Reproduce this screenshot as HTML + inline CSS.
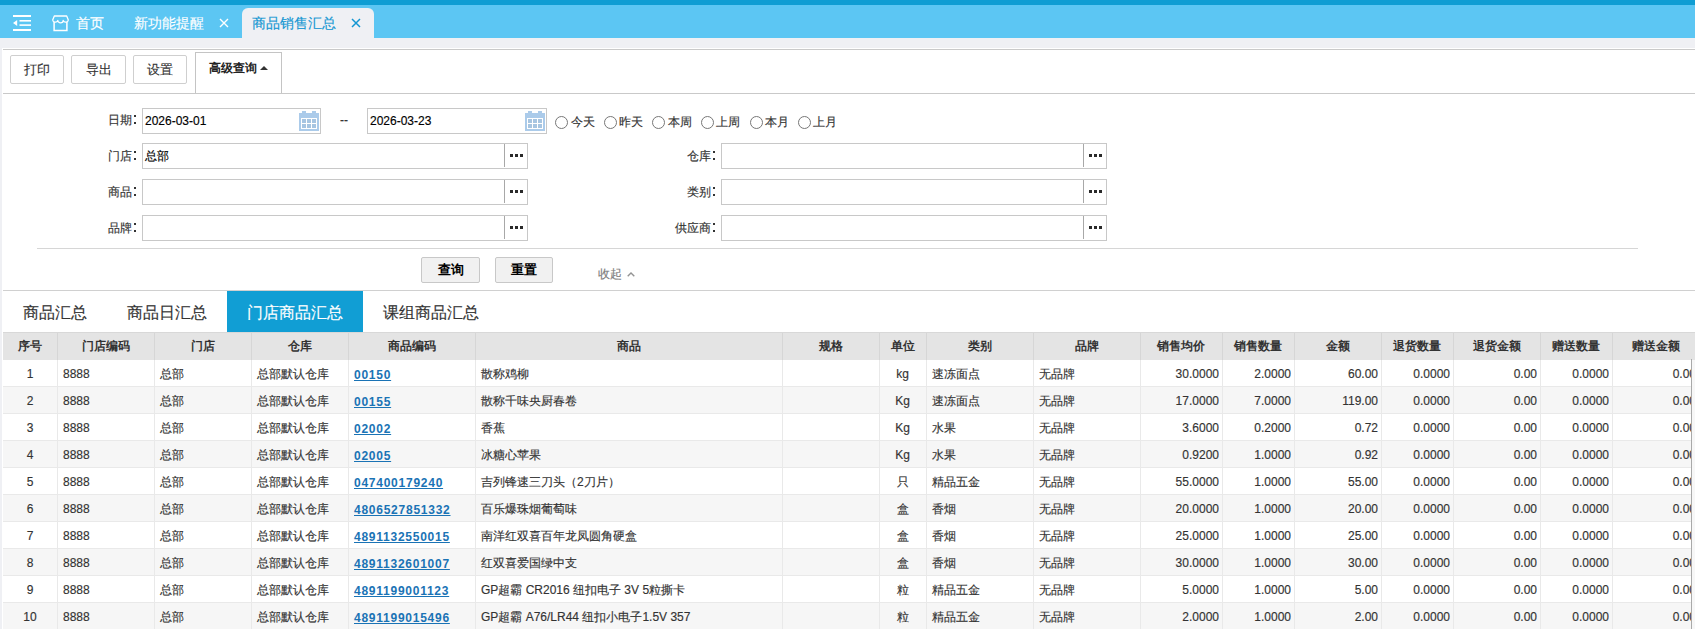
<!DOCTYPE html>
<html><head><meta charset="utf-8">
<style>
*{box-sizing:border-box;margin:0;padding:0}
html,body{width:1695px;height:629px;overflow:hidden}
body{position:relative;-webkit-text-stroke:0.15px currentColor;background:#eff0f4;font-family:"Liberation Sans",sans-serif;color:#333;font-size:12px}
.a{position:absolute}
.topdark{left:0;top:0;width:1695px;height:5px;background:#0f9dd3}
.toplight{left:0;top:5px;width:1695px;height:33px;background:#5cc6f3}
.ttxt{font-size:14px;color:#fff;line-height:14px;white-space:nowrap}
.acttab{left:242px;top:8px;width:132px;height:30px;background:#eff0f4;border-radius:6px 6px 0 0}
.panel{left:2px;top:48px;width:1693px;height:581px;background:#fff}
.hl{height:1px;background:#c9c9c9}
.btn{height:29px;top:55px;border:1px solid #cfcfcf;border-radius:2px;background:#fff;font-size:13px;line-height:27px;text-align:center;color:#333}
.lbl{font-size:12px;line-height:12px;white-space:nowrap;text-align:right}
.inp{border:1px solid #c8c8c8;height:26px;background:#fff}
.inp .v{position:absolute;left:2px;top:0;line-height:24px;font-size:12px;color:#000}
.ell{position:absolute;right:0;top:0;width:23px;height:24px}
.ell:before{content:"";position:absolute;left:0;top:0;width:1px;height:23px;background:#a8a8a8}
.ell i{position:absolute;top:10px;width:3px;height:3px;background:#2a2a2a}
.radio{width:13px;height:13px;border:1px solid #777;border-radius:50%;top:116px}
.rtxt{top:116px;font-size:12px;line-height:13px;white-space:nowrap}
.qbtn{-webkit-text-stroke:0;top:257px;height:26px;border:1px solid #c8c8c8;border-radius:2px;background:#f1f1f1;font-size:13px;font-weight:bold;line-height:24px;text-align:center;color:#000}
.tab{top:292px;height:41px;font-size:16px;line-height:41px;white-space:nowrap;color:#333}
.th{-webkit-text-stroke:0;top:333px;height:27px;line-height:27px;font-size:12px;font-weight:bold;text-align:center;color:#333;white-space:nowrap}
.td{height:26px;line-height:28px;font-size:12px;white-space:nowrap;overflow:hidden;color:#333}
.tl{padding-left:6px}
.tc{text-align:center}
.tr{text-align:right;padding-right:3px}
.td u{-webkit-text-stroke:0;color:#1a73b5;font-weight:bold;letter-spacing:.75px;position:relative;top:1px}
</style></head><body>
<div class="a topdark"></div>
<div class="a toplight"></div>
<!-- menu icon -->
<svg class="a" style="left:13px;top:15px" width="19" height="17" viewBox="0 0 19 17">
<rect x="0" y="0" width="18" height="2" fill="#fff"/>
<rect x="6.5" y="5" width="11.5" height="1.6" fill="#fff"/>
<rect x="6.5" y="9.3" width="11.5" height="1.6" fill="#fff"/>
<rect x="0" y="14" width="18" height="2" fill="#fff"/>
<path d="M0 8 L4.2 5 L4.2 11 Z" fill="#fff"/>
</svg>
<!-- store icon -->
<svg class="a" style="left:52px;top:15px" width="17" height="17" viewBox="0 0 17 17">
<path d="M2.3 1 H14.7 L16.3 5 A2.6 2.4 0 0 1 11.2 5.4 A2.7 2.4 0 0 1 5.8 5.4 A2.6 2.4 0 0 1 0.7 5 Z" fill="none" stroke="#fff" stroke-width="1.3" stroke-linejoin="round"/>
<path d="M2.1 7 V15.6 H14.9 V7" fill="none" stroke="#fff" stroke-width="1.5"/>
</svg>
<div class="a ttxt" style="left:76px;top:16px">首页</div>
<div class="a ttxt" style="left:134px;top:16px">新功能提醒</div>
<svg class="a" style="left:219px;top:18px" width="10" height="10" viewBox="0 0 10 10"><path d="M1 1 L9 9 M9 1 L1 9" stroke="#fff" stroke-width="1.4"/></svg>
<div class="a acttab"></div>
<div class="a ttxt" style="left:252px;top:16px;color:#1396d2">商品销售汇总</div>
<svg class="a" style="left:351px;top:18px" width="10" height="10" viewBox="0 0 10 10"><path d="M1 1 L9 9 M9 1 L1 9" stroke="#1396d2" stroke-width="1.5"/></svg>

<div class="a panel"></div>
<div class="a hl" style="left:3px;top:49px;width:1692px"></div>
<div class="a btn" style="left:10px;width:54px">打印</div>
<div class="a btn" style="left:71px;width:55px">导出</div>
<div class="a btn" style="left:133px;width:54px">设置</div>
<div class="a" style="left:195px;top:52px;width:87px;height:42px;border:1px solid #c4c4c4;border-bottom:none;background:#fff"></div>
<div class="a" style="-webkit-text-stroke:0;left:209px;top:62px;font-size:12px;font-weight:bold;line-height:13px;color:#222;white-space:nowrap">高级查询</div>
<svg class="a" style="left:260px;top:66px" width="8" height="4" viewBox="0 0 8 4"><path d="M0 4 L4 0 L8 4 Z" fill="#333"/></svg>
<div class="a hl" style="left:3px;top:93px;width:1692px"></div>

<!-- form -->
<div class="a lbl" style="left:52px;top:114px;width:80px">日期</div><div class="a" style="left:134px;top:115px;width:2px;height:2px;background:#333"></div><div class="a" style="left:134px;top:122px;width:2px;height:2px;background:#333"></div>
<div class="a inp" style="left:142px;top:108px;width:179px"><span class="v">2026-03-01</span>
<svg class="a" style="left:156px;top:2px" width="20" height="20" viewBox="0 0 20 20">
<rect x="3" y="0" width="4" height="2" fill="#abcbea"/><rect x="13" y="0" width="4" height="2" fill="#abcbea"/>
<rect x="0" y="2" width="20" height="18" fill="#abcbea"/>
<rect x="2" y="7" width="16" height="11" fill="#fff"/>
<rect x="3" y="8" width="4" height="4" fill="#a7c5e1"/><rect x="8" y="8" width="4" height="4" fill="#a7c5e1"/><rect x="13" y="8" width="4" height="4" fill="#a7c5e1"/>
<rect x="3" y="13" width="4" height="4" fill="#a7c5e1"/><rect x="8" y="13" width="4" height="4" fill="#a7c5e1"/><rect x="13" y="13" width="4" height="4" fill="#a7c5e1"/>
</svg></div>
<div class="a" style="left:340px;top:114px;font-size:12px;line-height:13px">--</div>
<div class="a inp" style="left:367px;top:108px;width:180px"><span class="v">2026-03-23</span>
<svg class="a" style="left:157px;top:2px" width="20" height="20" viewBox="0 0 20 20">
<rect x="3" y="0" width="4" height="2" fill="#abcbea"/><rect x="13" y="0" width="4" height="2" fill="#abcbea"/>
<rect x="0" y="2" width="20" height="18" fill="#abcbea"/>
<rect x="2" y="7" width="16" height="11" fill="#fff"/>
<rect x="3" y="8" width="4" height="4" fill="#a7c5e1"/><rect x="8" y="8" width="4" height="4" fill="#a7c5e1"/><rect x="13" y="8" width="4" height="4" fill="#a7c5e1"/>
<rect x="3" y="13" width="4" height="4" fill="#a7c5e1"/><rect x="8" y="13" width="4" height="4" fill="#a7c5e1"/><rect x="13" y="13" width="4" height="4" fill="#a7c5e1"/>
</svg></div>
<div class="a radio" style="left:555px"></div><div class="a rtxt" style="left:571px">今天</div>
<div class="a radio" style="left:604px"></div><div class="a rtxt" style="left:619px">昨天</div>
<div class="a radio" style="left:652px"></div><div class="a rtxt" style="left:668px">本周</div>
<div class="a radio" style="left:701px"></div><div class="a rtxt" style="left:716px">上周</div>
<div class="a radio" style="left:750px"></div><div class="a rtxt" style="left:765px">本月</div>
<div class="a radio" style="left:798px"></div><div class="a rtxt" style="left:813px">上月</div>

<div class="a lbl" style="left:52px;top:150px;width:80px">门店</div><div class="a" style="left:134px;top:151px;width:2px;height:2px;background:#333"></div><div class="a" style="left:134px;top:158px;width:2px;height:2px;background:#333"></div>
<div class="a inp" style="left:142px;top:143px;width:386px"><span class="v">总部</span><div class="ell"><i style="left:6px"></i><i style="left:11px"></i><i style="left:16px"></i></div></div>
<div class="a lbl" style="left:52px;top:186px;width:80px">商品</div><div class="a" style="left:134px;top:187px;width:2px;height:2px;background:#333"></div><div class="a" style="left:134px;top:194px;width:2px;height:2px;background:#333"></div>
<div class="a inp" style="left:142px;top:179px;width:386px"><div class="ell"><i style="left:6px"></i><i style="left:11px"></i><i style="left:16px"></i></div></div>
<div class="a lbl" style="left:52px;top:222px;width:80px">品牌</div><div class="a" style="left:134px;top:223px;width:2px;height:2px;background:#333"></div><div class="a" style="left:134px;top:230px;width:2px;height:2px;background:#333"></div>
<div class="a inp" style="left:142px;top:215px;width:386px"><div class="ell"><i style="left:6px"></i><i style="left:11px"></i><i style="left:16px"></i></div></div>

<div class="a lbl" style="left:631px;top:150px;width:80px">仓库</div><div class="a" style="left:713px;top:151px;width:2px;height:2px;background:#333"></div><div class="a" style="left:713px;top:158px;width:2px;height:2px;background:#333"></div>
<div class="a inp" style="left:721px;top:143px;width:386px"><div class="ell"><i style="left:6px"></i><i style="left:11px"></i><i style="left:16px"></i></div></div>
<div class="a lbl" style="left:631px;top:186px;width:80px">类别</div><div class="a" style="left:713px;top:187px;width:2px;height:2px;background:#333"></div><div class="a" style="left:713px;top:194px;width:2px;height:2px;background:#333"></div>
<div class="a inp" style="left:721px;top:179px;width:386px"><div class="ell"><i style="left:6px"></i><i style="left:11px"></i><i style="left:16px"></i></div></div>
<div class="a lbl" style="left:631px;top:222px;width:80px">供应商</div><div class="a" style="left:713px;top:223px;width:2px;height:2px;background:#333"></div><div class="a" style="left:713px;top:230px;width:2px;height:2px;background:#333"></div>
<div class="a inp" style="left:721px;top:215px;width:386px"><div class="ell"><i style="left:6px"></i><i style="left:11px"></i><i style="left:16px"></i></div></div>

<div class="a hl" style="left:37px;top:248px;width:1601px;background:#d6d6d6"></div>
<div class="a qbtn" style="left:421px;width:59px">查询</div>
<div class="a qbtn" style="left:495px;width:58px">重置</div>
<div class="a" style="left:598px;top:268px;font-size:12px;line-height:13px;color:#7c7c7c">收起</div>
<svg class="a" style="left:627px;top:272px" width="8" height="5" viewBox="0 0 8 5"><path d="M0.7 4.3 L4 1.1 L7.3 4.3" fill="none" stroke="#939393" stroke-width="1.4"/></svg>
<div class="a hl" style="left:3px;top:290px;width:1692px;background:#d0d0d0"></div>

<div class="a tab" style="left:23px">商品汇总</div>
<div class="a tab" style="left:127px">商品日汇总</div>
<div class="a" style="left:227px;top:291px;width:136px;height:41px;background:#119ed4"></div>
<div class="a tab" style="left:247px;color:#fff">门店商品汇总</div>
<div class="a tab" style="left:383px">课组商品汇总</div>

<!--TABLE-->
<div class="a" style="left:3px;top:332px;width:1692px;height:1px;background:#d8d8d8"></div>
<div class="a" style="left:3px;top:333px;width:1692px;height:27px;background:#e4e4e4"></div>
<div class="a th" style="left:3px;width:54px">序号</div>
<div class="a th" style="left:57px;width:97px">门店编码</div>
<div class="a" style="left:57px;top:333px;width:1px;height:27px;background:#d6d6d6"></div>
<div class="a th" style="left:154px;width:97px">门店</div>
<div class="a" style="left:154px;top:333px;width:1px;height:27px;background:#d6d6d6"></div>
<div class="a th" style="left:251px;width:97px">仓库</div>
<div class="a" style="left:251px;top:333px;width:1px;height:27px;background:#d6d6d6"></div>
<div class="a th" style="left:348px;width:127px">商品编码</div>
<div class="a" style="left:348px;top:333px;width:1px;height:27px;background:#d6d6d6"></div>
<div class="a th" style="left:475px;width:307px">商品</div>
<div class="a" style="left:475px;top:333px;width:1px;height:27px;background:#d6d6d6"></div>
<div class="a th" style="left:782px;width:97px">规格</div>
<div class="a" style="left:782px;top:333px;width:1px;height:27px;background:#d6d6d6"></div>
<div class="a th" style="left:879px;width:47px">单位</div>
<div class="a" style="left:879px;top:333px;width:1px;height:27px;background:#d6d6d6"></div>
<div class="a th" style="left:926px;width:107px">类别</div>
<div class="a" style="left:926px;top:333px;width:1px;height:27px;background:#d6d6d6"></div>
<div class="a th" style="left:1033px;width:107px">品牌</div>
<div class="a" style="left:1033px;top:333px;width:1px;height:27px;background:#d6d6d6"></div>
<div class="a th" style="left:1140px;width:82px">销售均价</div>
<div class="a" style="left:1140px;top:333px;width:1px;height:27px;background:#d6d6d6"></div>
<div class="a th" style="left:1222px;width:72px">销售数量</div>
<div class="a" style="left:1222px;top:333px;width:1px;height:27px;background:#d6d6d6"></div>
<div class="a th" style="left:1294px;width:87px">金额</div>
<div class="a" style="left:1294px;top:333px;width:1px;height:27px;background:#d6d6d6"></div>
<div class="a th" style="left:1381px;width:72px">退货数量</div>
<div class="a" style="left:1381px;top:333px;width:1px;height:27px;background:#d6d6d6"></div>
<div class="a th" style="left:1453px;width:87px">退货金额</div>
<div class="a" style="left:1453px;top:333px;width:1px;height:27px;background:#d6d6d6"></div>
<div class="a th" style="left:1540px;width:72px">赠送数量</div>
<div class="a" style="left:1540px;top:333px;width:1px;height:27px;background:#d6d6d6"></div>
<div class="a th" style="left:1612px;width:87px">赠送金额</div>
<div class="a" style="left:1612px;top:333px;width:1px;height:27px;background:#d6d6d6"></div>
<div class="a" style="left:3px;top:360px;width:1688px;height:26px;background:#fff"></div>
<div class="a" style="left:3px;top:386px;width:1688px;height:1px;background:#e9e9e9"></div>
<div class="a td tc" style="left:3px;top:360px;width:54px">1</div>
<div class="a td tl" style="left:57px;top:360px;width:97px">8888</div>
<div class="a td tl" style="left:154px;top:360px;width:97px">总部</div>
<div class="a td tl" style="left:251px;top:360px;width:97px">总部默认仓库</div>
<div class="a td tl" style="left:348px;top:360px;width:127px"><u>00150</u></div>
<div class="a td tl" style="left:475px;top:360px;width:307px">散称鸡柳</div>
<div class="a td tc" style="left:879px;top:360px;width:47px">kg</div>
<div class="a td tl" style="left:926px;top:360px;width:107px">速冻面点</div>
<div class="a td tl" style="left:1033px;top:360px;width:107px">无品牌</div>
<div class="a td tr" style="left:1140px;top:360px;width:82px">30.0000</div>
<div class="a td tr" style="left:1222px;top:360px;width:72px">2.0000</div>
<div class="a td tr" style="left:1294px;top:360px;width:87px">60.00</div>
<div class="a td tr" style="left:1381px;top:360px;width:72px">0.0000</div>
<div class="a td tr" style="left:1453px;top:360px;width:87px">0.00</div>
<div class="a td tr" style="left:1540px;top:360px;width:72px">0.0000</div>
<div class="a td tr" style="left:1612px;top:360px;width:87px">0.00</div>
<div class="a" style="left:3px;top:387px;width:1688px;height:26px;background:#f6f6f6"></div>
<div class="a" style="left:3px;top:413px;width:1688px;height:1px;background:#e9e9e9"></div>
<div class="a td tc" style="left:3px;top:387px;width:54px">2</div>
<div class="a td tl" style="left:57px;top:387px;width:97px">8888</div>
<div class="a td tl" style="left:154px;top:387px;width:97px">总部</div>
<div class="a td tl" style="left:251px;top:387px;width:97px">总部默认仓库</div>
<div class="a td tl" style="left:348px;top:387px;width:127px"><u>00155</u></div>
<div class="a td tl" style="left:475px;top:387px;width:307px">散称千味央厨春卷</div>
<div class="a td tc" style="left:879px;top:387px;width:47px">Kg</div>
<div class="a td tl" style="left:926px;top:387px;width:107px">速冻面点</div>
<div class="a td tl" style="left:1033px;top:387px;width:107px">无品牌</div>
<div class="a td tr" style="left:1140px;top:387px;width:82px">17.0000</div>
<div class="a td tr" style="left:1222px;top:387px;width:72px">7.0000</div>
<div class="a td tr" style="left:1294px;top:387px;width:87px">119.00</div>
<div class="a td tr" style="left:1381px;top:387px;width:72px">0.0000</div>
<div class="a td tr" style="left:1453px;top:387px;width:87px">0.00</div>
<div class="a td tr" style="left:1540px;top:387px;width:72px">0.0000</div>
<div class="a td tr" style="left:1612px;top:387px;width:87px">0.00</div>
<div class="a" style="left:3px;top:414px;width:1688px;height:26px;background:#fff"></div>
<div class="a" style="left:3px;top:440px;width:1688px;height:1px;background:#e9e9e9"></div>
<div class="a td tc" style="left:3px;top:414px;width:54px">3</div>
<div class="a td tl" style="left:57px;top:414px;width:97px">8888</div>
<div class="a td tl" style="left:154px;top:414px;width:97px">总部</div>
<div class="a td tl" style="left:251px;top:414px;width:97px">总部默认仓库</div>
<div class="a td tl" style="left:348px;top:414px;width:127px"><u>02002</u></div>
<div class="a td tl" style="left:475px;top:414px;width:307px">香蕉</div>
<div class="a td tc" style="left:879px;top:414px;width:47px">Kg</div>
<div class="a td tl" style="left:926px;top:414px;width:107px">水果</div>
<div class="a td tl" style="left:1033px;top:414px;width:107px">无品牌</div>
<div class="a td tr" style="left:1140px;top:414px;width:82px">3.6000</div>
<div class="a td tr" style="left:1222px;top:414px;width:72px">0.2000</div>
<div class="a td tr" style="left:1294px;top:414px;width:87px">0.72</div>
<div class="a td tr" style="left:1381px;top:414px;width:72px">0.0000</div>
<div class="a td tr" style="left:1453px;top:414px;width:87px">0.00</div>
<div class="a td tr" style="left:1540px;top:414px;width:72px">0.0000</div>
<div class="a td tr" style="left:1612px;top:414px;width:87px">0.00</div>
<div class="a" style="left:3px;top:441px;width:1688px;height:26px;background:#f6f6f6"></div>
<div class="a" style="left:3px;top:467px;width:1688px;height:1px;background:#e9e9e9"></div>
<div class="a td tc" style="left:3px;top:441px;width:54px">4</div>
<div class="a td tl" style="left:57px;top:441px;width:97px">8888</div>
<div class="a td tl" style="left:154px;top:441px;width:97px">总部</div>
<div class="a td tl" style="left:251px;top:441px;width:97px">总部默认仓库</div>
<div class="a td tl" style="left:348px;top:441px;width:127px"><u>02005</u></div>
<div class="a td tl" style="left:475px;top:441px;width:307px">冰糖心苹果</div>
<div class="a td tc" style="left:879px;top:441px;width:47px">Kg</div>
<div class="a td tl" style="left:926px;top:441px;width:107px">水果</div>
<div class="a td tl" style="left:1033px;top:441px;width:107px">无品牌</div>
<div class="a td tr" style="left:1140px;top:441px;width:82px">0.9200</div>
<div class="a td tr" style="left:1222px;top:441px;width:72px">1.0000</div>
<div class="a td tr" style="left:1294px;top:441px;width:87px">0.92</div>
<div class="a td tr" style="left:1381px;top:441px;width:72px">0.0000</div>
<div class="a td tr" style="left:1453px;top:441px;width:87px">0.00</div>
<div class="a td tr" style="left:1540px;top:441px;width:72px">0.0000</div>
<div class="a td tr" style="left:1612px;top:441px;width:87px">0.00</div>
<div class="a" style="left:3px;top:468px;width:1688px;height:26px;background:#fff"></div>
<div class="a" style="left:3px;top:494px;width:1688px;height:1px;background:#e9e9e9"></div>
<div class="a td tc" style="left:3px;top:468px;width:54px">5</div>
<div class="a td tl" style="left:57px;top:468px;width:97px">8888</div>
<div class="a td tl" style="left:154px;top:468px;width:97px">总部</div>
<div class="a td tl" style="left:251px;top:468px;width:97px">总部默认仓库</div>
<div class="a td tl" style="left:348px;top:468px;width:127px"><u>047400179240</u></div>
<div class="a td tl" style="left:475px;top:468px;width:307px">吉列锋速三刀头（2刀片）</div>
<div class="a td tc" style="left:879px;top:468px;width:47px">只</div>
<div class="a td tl" style="left:926px;top:468px;width:107px">精品五金</div>
<div class="a td tl" style="left:1033px;top:468px;width:107px">无品牌</div>
<div class="a td tr" style="left:1140px;top:468px;width:82px">55.0000</div>
<div class="a td tr" style="left:1222px;top:468px;width:72px">1.0000</div>
<div class="a td tr" style="left:1294px;top:468px;width:87px">55.00</div>
<div class="a td tr" style="left:1381px;top:468px;width:72px">0.0000</div>
<div class="a td tr" style="left:1453px;top:468px;width:87px">0.00</div>
<div class="a td tr" style="left:1540px;top:468px;width:72px">0.0000</div>
<div class="a td tr" style="left:1612px;top:468px;width:87px">0.00</div>
<div class="a" style="left:3px;top:495px;width:1688px;height:26px;background:#f6f6f6"></div>
<div class="a" style="left:3px;top:521px;width:1688px;height:1px;background:#e9e9e9"></div>
<div class="a td tc" style="left:3px;top:495px;width:54px">6</div>
<div class="a td tl" style="left:57px;top:495px;width:97px">8888</div>
<div class="a td tl" style="left:154px;top:495px;width:97px">总部</div>
<div class="a td tl" style="left:251px;top:495px;width:97px">总部默认仓库</div>
<div class="a td tl" style="left:348px;top:495px;width:127px"><u>4806527851332</u></div>
<div class="a td tl" style="left:475px;top:495px;width:307px">百乐爆珠烟葡萄味</div>
<div class="a td tc" style="left:879px;top:495px;width:47px">盒</div>
<div class="a td tl" style="left:926px;top:495px;width:107px">香烟</div>
<div class="a td tl" style="left:1033px;top:495px;width:107px">无品牌</div>
<div class="a td tr" style="left:1140px;top:495px;width:82px">20.0000</div>
<div class="a td tr" style="left:1222px;top:495px;width:72px">1.0000</div>
<div class="a td tr" style="left:1294px;top:495px;width:87px">20.00</div>
<div class="a td tr" style="left:1381px;top:495px;width:72px">0.0000</div>
<div class="a td tr" style="left:1453px;top:495px;width:87px">0.00</div>
<div class="a td tr" style="left:1540px;top:495px;width:72px">0.0000</div>
<div class="a td tr" style="left:1612px;top:495px;width:87px">0.00</div>
<div class="a" style="left:3px;top:522px;width:1688px;height:26px;background:#fff"></div>
<div class="a" style="left:3px;top:548px;width:1688px;height:1px;background:#e9e9e9"></div>
<div class="a td tc" style="left:3px;top:522px;width:54px">7</div>
<div class="a td tl" style="left:57px;top:522px;width:97px">8888</div>
<div class="a td tl" style="left:154px;top:522px;width:97px">总部</div>
<div class="a td tl" style="left:251px;top:522px;width:97px">总部默认仓库</div>
<div class="a td tl" style="left:348px;top:522px;width:127px"><u>4891132550015</u></div>
<div class="a td tl" style="left:475px;top:522px;width:307px">南洋红双喜百年龙凤圆角硬盒</div>
<div class="a td tc" style="left:879px;top:522px;width:47px">盒</div>
<div class="a td tl" style="left:926px;top:522px;width:107px">香烟</div>
<div class="a td tl" style="left:1033px;top:522px;width:107px">无品牌</div>
<div class="a td tr" style="left:1140px;top:522px;width:82px">25.0000</div>
<div class="a td tr" style="left:1222px;top:522px;width:72px">1.0000</div>
<div class="a td tr" style="left:1294px;top:522px;width:87px">25.00</div>
<div class="a td tr" style="left:1381px;top:522px;width:72px">0.0000</div>
<div class="a td tr" style="left:1453px;top:522px;width:87px">0.00</div>
<div class="a td tr" style="left:1540px;top:522px;width:72px">0.0000</div>
<div class="a td tr" style="left:1612px;top:522px;width:87px">0.00</div>
<div class="a" style="left:3px;top:549px;width:1688px;height:26px;background:#f6f6f6"></div>
<div class="a" style="left:3px;top:575px;width:1688px;height:1px;background:#e9e9e9"></div>
<div class="a td tc" style="left:3px;top:549px;width:54px">8</div>
<div class="a td tl" style="left:57px;top:549px;width:97px">8888</div>
<div class="a td tl" style="left:154px;top:549px;width:97px">总部</div>
<div class="a td tl" style="left:251px;top:549px;width:97px">总部默认仓库</div>
<div class="a td tl" style="left:348px;top:549px;width:127px"><u>4891132601007</u></div>
<div class="a td tl" style="left:475px;top:549px;width:307px">红双喜爱国绿中支</div>
<div class="a td tc" style="left:879px;top:549px;width:47px">盒</div>
<div class="a td tl" style="left:926px;top:549px;width:107px">香烟</div>
<div class="a td tl" style="left:1033px;top:549px;width:107px">无品牌</div>
<div class="a td tr" style="left:1140px;top:549px;width:82px">30.0000</div>
<div class="a td tr" style="left:1222px;top:549px;width:72px">1.0000</div>
<div class="a td tr" style="left:1294px;top:549px;width:87px">30.00</div>
<div class="a td tr" style="left:1381px;top:549px;width:72px">0.0000</div>
<div class="a td tr" style="left:1453px;top:549px;width:87px">0.00</div>
<div class="a td tr" style="left:1540px;top:549px;width:72px">0.0000</div>
<div class="a td tr" style="left:1612px;top:549px;width:87px">0.00</div>
<div class="a" style="left:3px;top:576px;width:1688px;height:26px;background:#fff"></div>
<div class="a" style="left:3px;top:602px;width:1688px;height:1px;background:#e9e9e9"></div>
<div class="a td tc" style="left:3px;top:576px;width:54px">9</div>
<div class="a td tl" style="left:57px;top:576px;width:97px">8888</div>
<div class="a td tl" style="left:154px;top:576px;width:97px">总部</div>
<div class="a td tl" style="left:251px;top:576px;width:97px">总部默认仓库</div>
<div class="a td tl" style="left:348px;top:576px;width:127px"><u>4891199001123</u></div>
<div class="a td tl" style="left:475px;top:576px;width:307px">GP超霸 CR2016 纽扣电子 3V 5粒撕卡</div>
<div class="a td tc" style="left:879px;top:576px;width:47px">粒</div>
<div class="a td tl" style="left:926px;top:576px;width:107px">精品五金</div>
<div class="a td tl" style="left:1033px;top:576px;width:107px">无品牌</div>
<div class="a td tr" style="left:1140px;top:576px;width:82px">5.0000</div>
<div class="a td tr" style="left:1222px;top:576px;width:72px">1.0000</div>
<div class="a td tr" style="left:1294px;top:576px;width:87px">5.00</div>
<div class="a td tr" style="left:1381px;top:576px;width:72px">0.0000</div>
<div class="a td tr" style="left:1453px;top:576px;width:87px">0.00</div>
<div class="a td tr" style="left:1540px;top:576px;width:72px">0.0000</div>
<div class="a td tr" style="left:1612px;top:576px;width:87px">0.00</div>
<div class="a" style="left:3px;top:603px;width:1688px;height:26px;background:#f6f6f6"></div>
<div class="a" style="left:3px;top:629px;width:1688px;height:1px;background:#e9e9e9"></div>
<div class="a td tc" style="left:3px;top:603px;width:54px">10</div>
<div class="a td tl" style="left:57px;top:603px;width:97px">8888</div>
<div class="a td tl" style="left:154px;top:603px;width:97px">总部</div>
<div class="a td tl" style="left:251px;top:603px;width:97px">总部默认仓库</div>
<div class="a td tl" style="left:348px;top:603px;width:127px"><u>4891199015496</u></div>
<div class="a td tl" style="left:475px;top:603px;width:307px">GP超霸 A76/LR44 纽扣小电子1.5V 357</div>
<div class="a td tc" style="left:879px;top:603px;width:47px">粒</div>
<div class="a td tl" style="left:926px;top:603px;width:107px">精品五金</div>
<div class="a td tl" style="left:1033px;top:603px;width:107px">无品牌</div>
<div class="a td tr" style="left:1140px;top:603px;width:82px">2.0000</div>
<div class="a td tr" style="left:1222px;top:603px;width:72px">1.0000</div>
<div class="a td tr" style="left:1294px;top:603px;width:87px">2.00</div>
<div class="a td tr" style="left:1381px;top:603px;width:72px">0.0000</div>
<div class="a td tr" style="left:1453px;top:603px;width:87px">0.00</div>
<div class="a td tr" style="left:1540px;top:603px;width:72px">0.0000</div>
<div class="a td tr" style="left:1612px;top:603px;width:87px">0.00</div>
<div class="a" style="left:57px;top:360px;width:1px;height:269px;background:#e9e9e9"></div>
<div class="a" style="left:154px;top:360px;width:1px;height:269px;background:#e9e9e9"></div>
<div class="a" style="left:251px;top:360px;width:1px;height:269px;background:#e9e9e9"></div>
<div class="a" style="left:348px;top:360px;width:1px;height:269px;background:#e9e9e9"></div>
<div class="a" style="left:475px;top:360px;width:1px;height:269px;background:#e9e9e9"></div>
<div class="a" style="left:782px;top:360px;width:1px;height:269px;background:#e9e9e9"></div>
<div class="a" style="left:879px;top:360px;width:1px;height:269px;background:#e9e9e9"></div>
<div class="a" style="left:926px;top:360px;width:1px;height:269px;background:#e9e9e9"></div>
<div class="a" style="left:1033px;top:360px;width:1px;height:269px;background:#e9e9e9"></div>
<div class="a" style="left:1140px;top:360px;width:1px;height:269px;background:#e9e9e9"></div>
<div class="a" style="left:1222px;top:360px;width:1px;height:269px;background:#e9e9e9"></div>
<div class="a" style="left:1294px;top:360px;width:1px;height:269px;background:#e9e9e9"></div>
<div class="a" style="left:1381px;top:360px;width:1px;height:269px;background:#e9e9e9"></div>
<div class="a" style="left:1453px;top:360px;width:1px;height:269px;background:#e9e9e9"></div>
<div class="a" style="left:1540px;top:360px;width:1px;height:269px;background:#e9e9e9"></div>
<div class="a" style="left:1612px;top:360px;width:1px;height:269px;background:#e9e9e9"></div>
<div class="a" style="left:1691px;top:359px;width:1px;height:270px;background:#a9a9a9"></div>
<div class="a" style="left:1692px;top:360px;width:3px;height:269px;background:#f7f7f7"></div>
<!--/TABLE-->
</body></html>
